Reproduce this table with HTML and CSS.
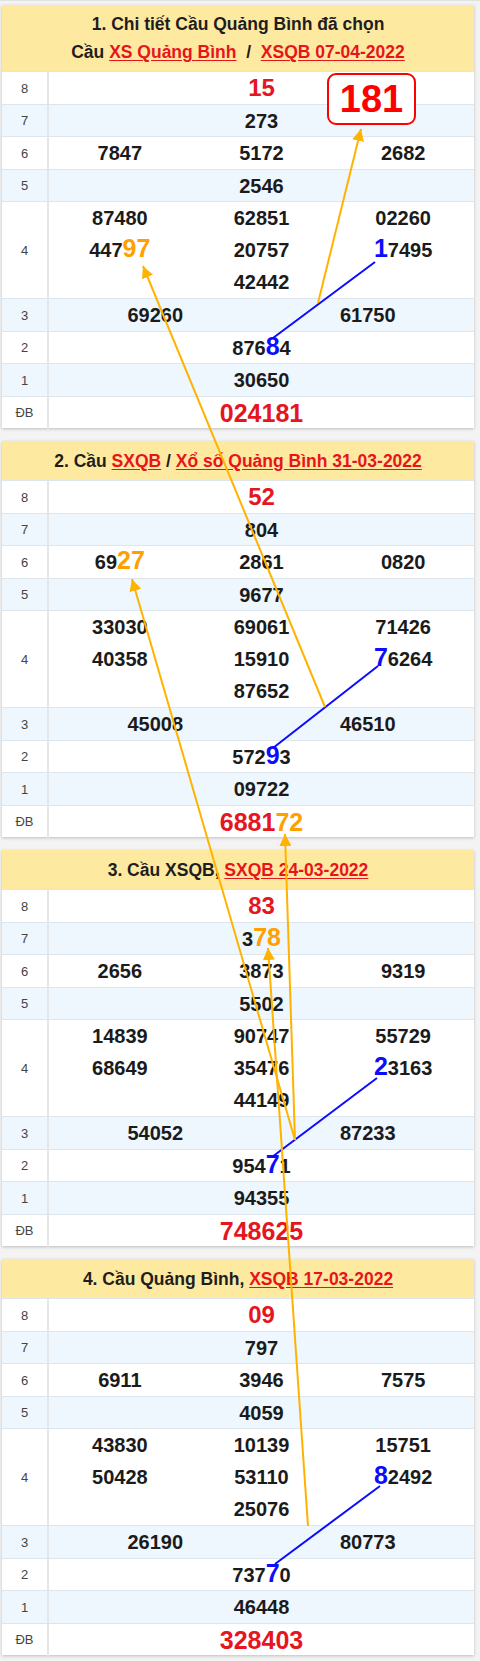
FILE: index.html
```html
<!DOCTYPE html>
<html lang="vi">
<head>
<meta charset="utf-8">
<title>Cầu Quảng Bình</title>
<link rel="stylesheet" href="styles.css">
</head>
<body>
<div class="page">

  <div class="card">
    <div class="hd hd2">
      <div>1. Chi tiết Cầu Quảng Bình đã chọn</div>
      <div>Cầu <a href="#">XS Quảng Bình</a> &nbsp;/&nbsp; <a href="#">XSQB 07-04-2022</a></div>
    </div>
    <div class="row"><div class="lbl">8</div><div class="cells c1"><span class="red">15</span></div></div>
    <div class="row alt"><div class="lbl">7</div><div class="cells c1"><span>273</span></div></div>
    <div class="row"><div class="lbl">6</div><div class="cells c3"><span>7847</span><span>5172</span><span>2682</span></div></div>
    <div class="row alt"><div class="lbl">5</div><div class="cells c1"><span>2546</span></div></div>
    <div class="row tall"><div class="lbl">4</div>
      <div class="cells c3 stack">
        <div class="col"><span>87480</span><span>447<b class="o">97</b></span></div>
        <div class="col"><span>62851</span><span>20757</span><span>42442</span></div>
        <div class="col"><span>02260</span><span><b class="bl">1</b>7495</span></div>
      </div>
    </div>
    <div class="row alt"><div class="lbl">3</div><div class="cells c2"><span>69260</span><span>61750</span></div></div>
    <div class="row"><div class="lbl">2</div><div class="cells c1"><span>876<b class="bl">8</b>4</span></div></div>
    <div class="row alt"><div class="lbl">1</div><div class="cells c1"><span>30650</span></div></div>
    <div class="row"><div class="lbl">ĐB</div><div class="cells c1"><span class="red db">024181</span></div></div>
    <div class="pick">181</div>
  </div>

  <div class="card">
    <div class="hd">2. Cầu <a href="#">SXQB</a> / <a href="#">Xổ số Quảng Bình 31-03-2022</a></div>
    <div class="row"><div class="lbl">8</div><div class="cells c1"><span class="red">52</span></div></div>
    <div class="row alt"><div class="lbl">7</div><div class="cells c1"><span>804</span></div></div>
    <div class="row"><div class="lbl">6</div><div class="cells c3"><span>69<b class="o">27</b></span><span>2861</span><span>0820</span></div></div>
    <div class="row alt"><div class="lbl">5</div><div class="cells c1"><span>9677</span></div></div>
    <div class="row tall"><div class="lbl">4</div>
      <div class="cells c3 stack">
        <div class="col"><span>33030</span><span>40358</span></div>
        <div class="col"><span>69061</span><span>15910</span><span>87652</span></div>
        <div class="col"><span>71426</span><span><b class="bl">7</b>6264</span></div>
      </div>
    </div>
    <div class="row alt"><div class="lbl">3</div><div class="cells c2"><span>45008</span><span>46510</span></div></div>
    <div class="row"><div class="lbl">2</div><div class="cells c1"><span>572<b class="bl">9</b>3</span></div></div>
    <div class="row alt"><div class="lbl">1</div><div class="cells c1"><span>09722</span></div></div>
    <div class="row"><div class="lbl">ĐB</div><div class="cells c1"><span class="red db">6881<b class="o ob">72</b></span></div></div>
  </div>

  <div class="card">
    <div class="hd">3. Cầu XSQB, <a href="#">SXQB 24-03-2022</a></div>
    <div class="row"><div class="lbl">8</div><div class="cells c1"><span class="red">83</span></div></div>
    <div class="row alt"><div class="lbl">7</div><div class="cells c1"><span>3<b class="o">78</b></span></div></div>
    <div class="row"><div class="lbl">6</div><div class="cells c3"><span>2656</span><span>3873</span><span>9319</span></div></div>
    <div class="row alt"><div class="lbl">5</div><div class="cells c1"><span>5502</span></div></div>
    <div class="row tall"><div class="lbl">4</div>
      <div class="cells c3 stack">
        <div class="col"><span>14839</span><span>68649</span></div>
        <div class="col"><span>90747</span><span>35476</span><span>44149</span></div>
        <div class="col"><span>55729</span><span><b class="bl">2</b>3163</span></div>
      </div>
    </div>
    <div class="row alt"><div class="lbl">3</div><div class="cells c2"><span>54052</span><span>87233</span></div></div>
    <div class="row"><div class="lbl">2</div><div class="cells c1"><span>954<b class="bl">7</b>1</span></div></div>
    <div class="row alt"><div class="lbl">1</div><div class="cells c1"><span>94355</span></div></div>
    <div class="row"><div class="lbl">ĐB</div><div class="cells c1"><span class="red db">748625</span></div></div>
  </div>

  <div class="card">
    <div class="hd">4. Cầu Quảng Bình, <a href="#">XSQB 17-03-2022</a></div>
    <div class="row"><div class="lbl">8</div><div class="cells c1"><span class="red">09</span></div></div>
    <div class="row alt"><div class="lbl">7</div><div class="cells c1"><span>797</span></div></div>
    <div class="row"><div class="lbl">6</div><div class="cells c3"><span>6911</span><span>3946</span><span>7575</span></div></div>
    <div class="row alt"><div class="lbl">5</div><div class="cells c1"><span>4059</span></div></div>
    <div class="row tall"><div class="lbl">4</div>
      <div class="cells c3 stack">
        <div class="col"><span>43830</span><span>50428</span></div>
        <div class="col"><span>10139</span><span>53110</span><span>25076</span></div>
        <div class="col"><span>15751</span><span><b class="bl">8</b>2492</span></div>
      </div>
    </div>
    <div class="row alt"><div class="lbl">3</div><div class="cells c2"><span>26190</span><span>80773</span></div></div>
    <div class="row"><div class="lbl">2</div><div class="cells c1"><span>737<b class="bl">7</b>0</span></div></div>
    <div class="row alt"><div class="lbl">1</div><div class="cells c1"><span>46448</span></div></div>
    <div class="row"><div class="lbl">ĐB</div><div class="cells c1"><span class="red db">328403</span></div></div>
  </div>

  <svg class="links" width="480" height="1661" viewBox="0 0 480 1661" aria-hidden="true">
    <defs>
      <marker id="ah" viewBox="0 0 12 12" refX="12" refY="6" markerWidth="12" markerHeight="12" markerUnits="userSpaceOnUse" orient="auto">
        <path d="M0,0 L12,6 L0,12 z" fill="#ffb300"/>
      </marker>
    </defs>
    <g stroke="#0b0bff" stroke-width="2" fill="none">
      <line x1="273" y1="337" x2="375" y2="261"/>
      <line x1="273" y1="747" x2="378" y2="665"/>
      <line x1="272" y1="1156" x2="377" y2="1077"/>
      <line x1="275" y1="1563" x2="380" y2="1485"/>
    </g>
    <g stroke="#ffb300" stroke-width="2" fill="none" marker-end="url(#ah)">
      <line x1="318" y1="302" x2="361" y2="128"/>
      <line x1="325" y1="706" x2="143" y2="265"/>
      <line x1="295" y1="1139" x2="132" y2="578"/>
      <line x1="295" y1="1139" x2="285" y2="833"/>
      <line x1="308" y1="1525" x2="268" y2="947"/>
    </g>
  </svg>
</div>
</body>
</html>
```

FILE: styles.css
```css
* { box-sizing: border-box; }

body {
  margin: 0;
  background: #f3f3f3;
  font-family: "Liberation Sans", Arial, sans-serif;
}

.page {
  position: relative;
  width: 480px;
  min-height: 1661px;
  padding: 4px 6px 0 2px;
  border-top: 1px solid #e2e2e2;
  background: #f3f3f3;
}

.card {
  position: relative;
  background: #fff;
  margin-bottom: 13px;
  box-shadow: 0 1px 3px rgba(0, 0, 0, 0.22);
}

.hd {
  background: #fee9a1;
  text-align: center;
  font-weight: bold;
  font-size: 17.5px;
  line-height: 28px;
  color: #1e1e1e;
  padding: 5.5px 0;
}

.hd2 {
  padding: 5px 0;
}

.hd a {
  color: #e8141c;
  text-decoration: underline;
  text-underline-offset: 2px;
}

.row {
  display: grid;
  grid-template-columns: 47px 1fr;
  height: 32.5px;
  border-top: 1px solid #dde5ed;
}

.row.alt {
  background: #eef6fe;
}

.row.tall {
  height: 97px;
}

.lbl {
  display: flex;
  align-items: center;
  justify-content: center;
  border-right: 2px solid #e4e6e8;
  font-size: 13px;
  color: #444;
}

.cells {
  display: grid;
  align-items: center;
  justify-items: center;
  font-weight: bold;
  font-size: 20px;
  line-height: 32px;
  color: #1b1b1b;
}

.c1 { grid-template-columns: 1fr; }
.c2 { grid-template-columns: 1fr 1fr; }
.c3 { grid-template-columns: 1fr 1fr 1fr; }

.cells.stack {
  align-items: start;
}

.col {
  display: flex;
  flex-direction: column;
  align-items: center;
}

.col span {
  height: 32px;
}

.red {
  color: #e5161f;
  font-size: 24px;
}

.red.db {
  font-size: 25px;
}

.o {
  color: #ffa000;
  font-size: 25px;
  line-height: 0;
}

.ob {
  font-size: 25px;
}

.bl {
  color: #0c0cff;
  font-size: 25px;
  line-height: 0;
}

.pick {
  position: absolute;
  left: 325px;
  top: 68px;
  width: 89px;
  height: 52px;
  border: 2px solid #f00;
  border-radius: 9px;
  background: #fff;
  color: #f00;
  font-weight: bold;
  font-size: 38px;
  line-height: 48px;
  text-align: center;
}

.links {
  position: absolute;
  left: 0;
  top: 0;
  pointer-events: none;
}
```
